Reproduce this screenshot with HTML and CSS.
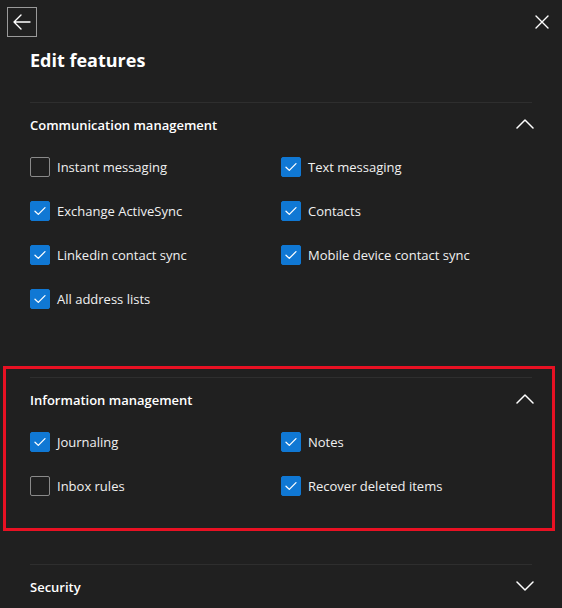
FILE: index.html
```html
<!DOCTYPE html>
<html lang="en">
<head>
<meta charset="utf-8">
<title>Edit features</title>
<link rel="stylesheet" href="styles.css">
</head>
<body>
<div class="panel">
  <div class="topbar">
    <button class="back" aria-label="Back">
      <svg width="18" height="16" viewBox="0 0 18 16"><path d="M8 1 L1 8 L8 15 M1 8 H17" fill="none" stroke="#fff" stroke-width="1.4" stroke-linecap="round" stroke-linejoin="round"/></svg>
    </button>
    <button class="close" aria-label="Close">
      <svg width="14" height="14" viewBox="0 0 14 14"><path d="M1 1 L13 13 M13 1 L1 13" fill="none" stroke="#fff" stroke-width="1.4" stroke-linecap="round"/></svg>
    </button>
  </div>
  <h1 class="title">Edit features</h1>

  <section class="section first">
    <div class="sec-head">
      <span>Communication management</span>
      <svg class="chev" width="18" height="10" viewBox="0 0 18 10"><path d="M1 9 L9 1 L17 9" fill="none" stroke="#fff" stroke-width="1.5" stroke-linecap="round" stroke-linejoin="round"/></svg>
    </div>
    <div class="grid">
      <label class="item"><span class="box"></span>Instant messaging</label>
      <label class="item"><span class="box on"><svg width="12" height="10" viewBox="0 0 12 10"><path d="M1 5.2 L4.3 8.4 L11 1.6" fill="none" stroke="#fff" stroke-width="1.3" stroke-linecap="round" stroke-linejoin="round"/></svg></span>Text messaging</label>
      <label class="item"><span class="box on"><svg width="12" height="10" viewBox="0 0 12 10"><path d="M1 5.2 L4.3 8.4 L11 1.6" fill="none" stroke="#fff" stroke-width="1.3" stroke-linecap="round" stroke-linejoin="round"/></svg></span>Exchange ActiveSync</label>
      <label class="item"><span class="box on"><svg width="12" height="10" viewBox="0 0 12 10"><path d="M1 5.2 L4.3 8.4 L11 1.6" fill="none" stroke="#fff" stroke-width="1.3" stroke-linecap="round" stroke-linejoin="round"/></svg></span>Contacts</label>
      <label class="item"><span class="box on"><svg width="12" height="10" viewBox="0 0 12 10"><path d="M1 5.2 L4.3 8.4 L11 1.6" fill="none" stroke="#fff" stroke-width="1.3" stroke-linecap="round" stroke-linejoin="round"/></svg></span>Linkedin contact sync</label>
      <label class="item"><span class="box on"><svg width="12" height="10" viewBox="0 0 12 10"><path d="M1 5.2 L4.3 8.4 L11 1.6" fill="none" stroke="#fff" stroke-width="1.3" stroke-linecap="round" stroke-linejoin="round"/></svg></span>Mobile device contact sync</label>
      <label class="item"><span class="box on"><svg width="12" height="10" viewBox="0 0 12 10"><path d="M1 5.2 L4.3 8.4 L11 1.6" fill="none" stroke="#fff" stroke-width="1.3" stroke-linecap="round" stroke-linejoin="round"/></svg></span>All address lists</label>
    </div>
  </section>

  <div class="highlight">
    <section class="section second">
      <div class="sec-head">
        <span>Information management</span>
        <svg class="chev" width="18" height="10" viewBox="0 0 18 10"><path d="M1 9 L9 1 L17 9" fill="none" stroke="#fff" stroke-width="1.5" stroke-linecap="round" stroke-linejoin="round"/></svg>
      </div>
      <div class="grid">
        <label class="item"><span class="box on"><svg width="12" height="10" viewBox="0 0 12 10"><path d="M1 5.2 L4.3 8.4 L11 1.6" fill="none" stroke="#fff" stroke-width="1.3" stroke-linecap="round" stroke-linejoin="round"/></svg></span>Journaling</label>
        <label class="item"><span class="box on"><svg width="12" height="10" viewBox="0 0 12 10"><path d="M1 5.2 L4.3 8.4 L11 1.6" fill="none" stroke="#fff" stroke-width="1.3" stroke-linecap="round" stroke-linejoin="round"/></svg></span>Notes</label>
        <label class="item"><span class="box"></span>Inbox rules</label>
        <label class="item"><span class="box on"><svg width="12" height="10" viewBox="0 0 12 10"><path d="M1 5.2 L4.3 8.4 L11 1.6" fill="none" stroke="#fff" stroke-width="1.3" stroke-linecap="round" stroke-linejoin="round"/></svg></span>Recover deleted items</label>
      </div>
    </section>
  </div>

  <section class="section third">
    <div class="sec-head">
      <span>Security</span>
      <svg class="chev" width="18" height="10" viewBox="0 0 18 10"><path d="M1 1 L9 9 L17 1" fill="none" stroke="#fff" stroke-width="1.5" stroke-linecap="round" stroke-linejoin="round"/></svg>
    </div>
  </section>
</div>
</body>
</html>
```

FILE: styles.css
```css
html, body {
  margin: 0;
  padding: 0;
  background: #202020;
  height: 100%;
  overflow: hidden;
}
body {
  font-family: "Segoe UI", "Open Sans", "Noto Sans", sans-serif;
  color: #fff;
}
.panel {
  width: 562px;
}
.topbar {
  display: flex;
  justify-content: space-between;
  align-items: center;
  padding: 7px 12px 0 7px;
  height: 29px;
}
.back {
  width: 30px;
  height: 30px;
  box-sizing: border-box;
  border: 1px solid #9a9a9a;
  background: transparent;
  padding: 0;
  display: flex;
  align-items: center;
  justify-content: center;
}
.close {
  width: 16px;
  height: 16px;
  background: transparent;
  border: 0;
  padding: 0;
  display: flex;
  align-items: center;
  justify-content: center;
}
.title {
  margin: 0;
  padding: 12px 30px 0;
  box-sizing: border-box;
  font-size: 18px;
  line-height: 24px;
  font-weight: 700;
  height: 66px;
}
.section {
  margin: 0 30px;
  border-top: 1px solid #2e2e2e;
}
.sec-head {
  height: 42px;
  padding-top: 2px;
  box-sizing: border-box;
  display: flex;
  align-items: center;
  justify-content: space-between;
  font-size: 13px;
  font-weight: 600;
}
.chev {
  margin-right: -2px;
  margin-top: -3px;
}
.grid {
  display: grid;
  grid-template-columns: 1fr 1fr;
  grid-auto-rows: 44px;
}
.item {
  display: flex;
  align-items: center;
  gap: 7px;
  font-size: 13px;
  color: #f0f0f0;
}
.box {
  width: 20px;
  height: 20px;
  box-sizing: border-box;
  border: 1px solid #8a8a8a;
  border-radius: 2px;
  display: flex;
  align-items: center;
  justify-content: center;
  flex: none;
}
.box.on {
  background: #1078d4;
  border-color: #1078d4;
}
.first {
  padding-bottom: 45px;
}
.highlight {
  margin: 0 7px 0 3px;
  border: 3px solid #e81123;
  padding: 8px 20px 20px 24px;
}
.highlight .section {
  margin: 0;
}
.third {
  margin-top: 33px;
}
```
